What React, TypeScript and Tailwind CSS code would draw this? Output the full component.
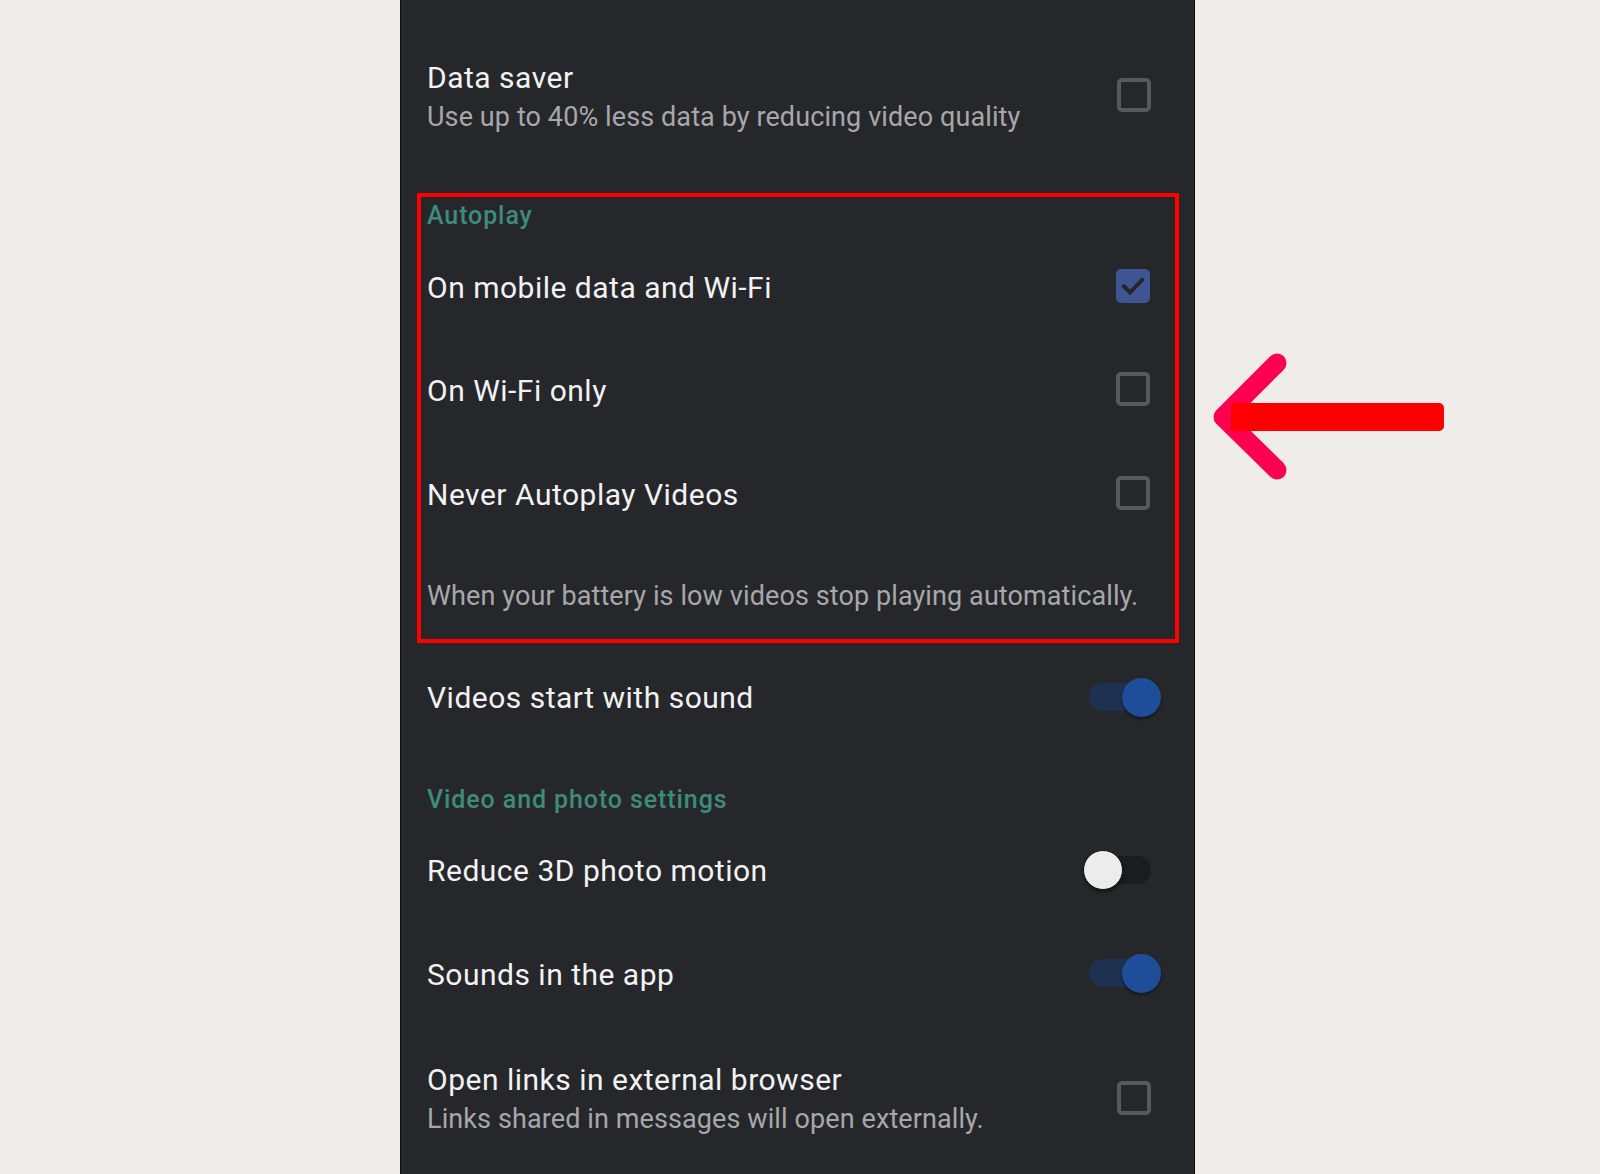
import { useState } from 'react';

const CheckBox = ({ checked, className = '' }: { checked?: boolean; className?: string }) =>
  checked ? (
    <div className={`w-[34px] h-[34px] rounded-[5px] bg-[#3e5594] flex items-center justify-center shrink-0 ${className}`}>
      <svg width="26" height="26" viewBox="0 0 26 26" fill="none">
        <path d="M4 13.5 L10 19.5 L22 7" stroke="#25262a" strokeWidth="4" strokeLinecap="square" />
      </svg>
    </div>
  ) : (
    <div className={`w-[34px] h-[34px] rounded-[5px] border-4 border-[#58595b] shrink-0 ${className}`} />
  );

const Toggle = ({ on, className = '' }: { on: boolean; className?: string }) => (
  <div className={`relative w-[62px] h-[28px] shrink-0 ${className}`}>
    <div className={`absolute inset-0 rounded-full ${on ? 'bg-[#1f3150]' : 'bg-[#1b1c1e]'}`} />
    {on ? (
      <div className="absolute -right-[10px] -top-[5px] w-[39px] h-[39px] rounded-full bg-[#1e4e99] shadow-[0_2px_3px_rgba(0,0,0,0.45)]" />
    ) : (
      <div className="absolute -left-[6px] -top-[6px] w-[40px] h-[40px] rounded-full bg-[#ececec] border border-[#111] shadow-[0_2px_3px_rgba(0,0,0,0.45)]" />
    )}
  </div>
);

const Title = ({ children }: { children: React.ReactNode }) => (
  <div className="text-[30px] leading-[34px] tracking-[0.5px] text-[#f2f2f2]">{children}</div>
);

const Sub = ({ children, className = '' }: { children: React.ReactNode; className?: string }) => (
  <div className={`text-[27px] leading-[30px] tracking-[0.1px] text-[#a7a8a9] ${className}`}>{children}</div>
);

const Header = ({ children, className = '' }: { children: React.ReactNode; className?: string }) => (
  <div className={`text-[25px] leading-[28px] tracking-[0.9px] font-medium text-[#3d8b7b] ${className}`}>{children}</div>
);

export default function App() {
  const [sound] = useState(true);

  return (
    <div className="w-[1600px] h-[1174px] bg-[#f0ecea] flex overflow-hidden font-['Roboto',sans-serif]">
      <div className="ml-[400px] w-[795px] h-full bg-[#26272b] border-x border-[#0d0d0d] flex flex-col">
        {/* Data saver */}
        <div className="mt-[61px] flex items-center pl-[26px] pr-[43px]">
          <div className="flex-1">
            <Title>Data saver</Title>
            <Sub className="mt-[7px]">Use up to 40% less data by reducing video quality</Sub>
          </div>
          <CheckBox className="mb-[4px]" />
        </div>

        {/* Autoplay box */}
        <div className="mt-[61px] ml-[16px] mr-[15px] border-4 border-[#ff0000] pt-[5px] pb-[28px] pl-[6px] pr-[25px]">
          <Header>Autoplay</Header>
          <div className="mt-[39px] flex items-center">
            <div className="flex-1"><Title>On mobile data and Wi-Fi</Title></div>
            <CheckBox checked className="mb-[3px]" />
          </div>
          <div className="mt-[66px] flex items-center">
            <div className="flex-1"><Title>On Wi-Fi only</Title></div>
            <CheckBox className="mb-[3px]" />
          </div>
          <div className="mt-[67px] flex items-center">
            <div className="flex-1"><Title>Never Autoplay Videos</Title></div>
            <CheckBox className="mb-[4px]" />
          </div>
          <Sub className="mt-[67px]">When your battery is low videos stop playing automatically.</Sub>
        </div>

        <div className="mt-[38px] flex items-center pl-[26px] pr-[43px]">
          <div className="flex-1"><Title>Videos start with sound</Title></div>
          <Toggle on={sound} className="mb-[2px]" />
        </div>

        <Header className="mt-[71px] pl-[26px]">Video and photo settings</Header>

        <div className="mt-[40px] flex items-center pl-[26px] pr-[43px]">
          <div className="flex-1"><Title>Reduce 3D photo motion</Title></div>
          <Toggle on={false} className="mb-[3px]" />
        </div>

        <div className="mt-[70px] flex items-center pl-[26px] pr-[43px]">
          <div className="flex-1"><Title>Sounds in the app</Title></div>
          <Toggle on className="mb-[4px]" />
        </div>

        <div className="mt-[71px] flex items-center pl-[26px] pr-[43px]">
          <div className="flex-1">
            <Title>Open links in external browser</Title>
            <Sub className="mt-[7px]">Links shared in messages will open externally.</Sub>
          </div>
          <CheckBox className="mb-[1px]" />
        </div>
      </div>

      <div className="ml-[5px] mt-[352px]">
        <svg width="250" height="130" viewBox="0 0 250 130" fill="none">
          <path d="M77 11 L23 65 L77 118" stroke="#ff0050" strokeWidth="19" strokeLinecap="round" strokeLinejoin="round" />
          <path d="M31 51 H239 a5 5 0 0 1 5 5 V74 a5 5 0 0 1 -5 5 H31 Z" fill="#ff0000" />
        </svg>
      </div>
    </div>
  );
}
